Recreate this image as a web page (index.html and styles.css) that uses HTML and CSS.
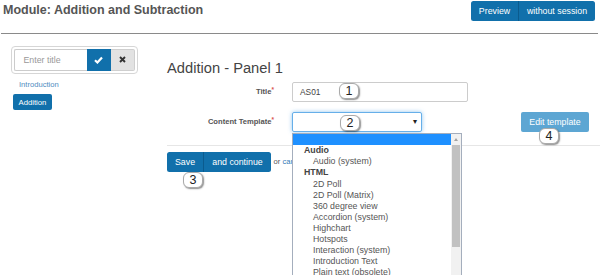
FILE: index.html
```html
<!DOCTYPE html>
<html>
<head>
<meta charset="utf-8">
<link rel="stylesheet" href="styles.css">
</head>
<body>
<div class="topbar">
  <h1 class="module-title">Module: Addition and Subtraction</h1>
  <div class="btn-group top-group"><span class="btn btn-primary">Preview</span><span class="btn btn-primary">without session</span></div>
</div>
<div class="main">
  <aside class="sidebar">
    <div class="title-box">
      <div class="title-input">Enter title</div>
      <span class="icon-btn ok"><svg width="9" height="8" viewBox="0 0 9 8"><path d="M1 4.3 L3.4 6.5 L8 1.5" fill="none" stroke="#fff" stroke-width="2.2"/></svg></span>
      <span class="icon-btn cancel"><svg width="7" height="7" viewBox="0 0 7 7"><path d="M1 1 L6 6 M6 1 L1 6" fill="none" stroke="#333" stroke-width="1.9"/></svg></span>
    </div>
    <a class="nav-link">Introduction</a>
    <span class="nav-active">Addition</span>
  </aside>
  <section class="content">
    <h2 class="panel-title">Addition - Panel 1</h2>
    <div class="form-row row-title">
      <label class="field-label">Title<span class="req">*</span></label>
      <div class="field text-field">AS01<span class="badge b1">1</span></div>
    </div>
    <div class="form-row row-template">
      <label class="field-label">Content Template<span class="req">*</span></label>
      <div class="field select-field">
        <span class="caret">&#9662;</span>
        <span class="badge b2">2</span>
        <div class="dropdown">
          <div class="dd-list">
            <div class="dd-item dd-selected"></div>
            <div class="dd-group">Audio</div>
            <div class="dd-item">Audio (system)</div>
            <div class="dd-group">HTML</div>
            <div class="dd-item">2D Poll</div>
            <div class="dd-item">2D Poll (Matrix)</div>
            <div class="dd-item">360 degree view</div>
            <div class="dd-item">Accordion (system)</div>
            <div class="dd-item">Highchart</div>
            <div class="dd-item">Hotspots</div>
            <div class="dd-item">Interaction (system)</div>
            <div class="dd-item">Introduction Text</div>
            <div class="dd-item">Plain text (obsolete)</div>
          </div>
          <div class="dd-scroll">
            <span class="dd-arrow"></span>
            <span class="dd-thumb"></span>
          </div>
        </div>
      </div>
      <span class="btn edit-btn">Edit template<span class="badge b4">4</span></span>
    </div>
    <hr class="divider">
    <div class="actions">
      <div class="btn-group save-group"><span class="btn btn-primary">Save</span><span class="btn btn-primary">and continue</span><span class="badge b3">3</span></div>
      <span class="or-text">or <a class="cancel-link">cancel</a></span>
    </div>
  </section>
</div>
</body>
</html>
```
FILE: styles.css
```css
html, body {
  margin: 0;
  padding: 0;
  height: 275px;
  overflow: hidden;
  background: #fff;
}
body {
  font-family: "Liberation Sans", Arial, sans-serif;
  color: #555;
  font-size: 8.8px;
}
.topbar {
  display: flex;
  justify-content: space-between;
  align-items: flex-start;
  height: 33px;
  margin: 0 2px 0 1px;
  padding: 0 3px 0 2px;
  border-bottom: 1px solid #8a8a8a;
}
.module-title {
  margin: 0;
  padding-top: 3.4px;
  font-size: 12.5px;
  line-height: 15px;
  font-weight: bold;
  color: #555;
}
.btn-group {
  display: flex;
  border-radius: 2.5px;
  overflow: hidden;
}
.top-group {
  margin-top: 1px;
  height: 20px;
}
.btn {
  display: flex;
  align-items: center;
  justify-content: center;
  font-size: 8.8px;
  color: #fff;
  white-space: nowrap;
}
.btn-primary {
  background: #1170ab;
}
.top-group .btn:first-child {
  width: 47px;
  border-right: 1px solid #0b5b8e;
}
.top-group .btn:last-child {
  width: 76px;
}
.main {
  display: flex;
}
.sidebar {
  width: 167px;
  flex: none;
  padding-top: 12px;
  display: flex;
  flex-direction: column;
  align-items: flex-start;
}
.title-box {
  margin-left: 11px;
  width: 121px;
  height: 21.5px;
  padding: 2px;
  border: 1px solid #d6d6d6;
  border-radius: 4px;
  display: flex;
}
.title-input {
  width: 63px;
  padding-left: 8.5px;
  border: 1px solid #ccc;
  border-right: none;
  border-radius: 2px 0 0 2px;
  color: #999;
  font-size: 8.8px;
  display: flex;
  align-items: center;
}
.icon-btn {
  width: 24px;
  display: flex;
  align-items: center;
  justify-content: center;
}
.icon-btn.ok {
  background: #1170ab;
}
.icon-btn.cancel {
  background: #e2e2e2;
  border: 1px solid #cfcfcf;
  border-left: none;
  border-radius: 0 2px 2px 0;
  box-sizing: border-box;
}
.nav-link {
  margin: 6.7px 0 0 19px;
  font-size: 7.6px;
  line-height: 10px;
  color: #4f8cc0;
}
.nav-active {
  margin: 4.3px 0 0 13px;
  height: 15.7px;
  padding: 0 5.6px;
  display: flex;
  align-items: center;
  background: #1170ab;
  color: #fff;
  font-size: 7.7px;
  border-radius: 2px;
}
.content {
  flex: 1;
  padding-top: 26px;
}
.panel-title {
  margin: 0;
  font-size: 14.7px;
  line-height: 17px;
  font-weight: normal;
  color: #444;
}
.form-row {
  display: grid;
  grid-template-columns: 107px auto 1fr;
  column-gap: 18px;
  align-items: center;
}
.row-title {
  margin-top: 4.7px;
}
.row-template {
  margin-top: 10.6px;
  padding-right: 11px;
}
.field-label {
  text-align: right;
  font-size: 7.6px;
  font-weight: bold;
  color: #555;
  margin-top: -2px;
}
.req {
  color: #d9534f;
  font-size: 6.5px;
  vertical-align: 2px;
}
.field {
  position: relative;
  height: 20px;
  box-sizing: border-box;
  background: #fff;
}
.text-field {
  width: 176px;
  border: 1px solid #ccc;
  border-radius: 2px;
  padding-left: 7px;
  font-size: 8.4px;
  color: #444;
  display: flex;
  align-items: center;
}
.select-field {
  width: 130px;
  border: 1px solid #66afe9;
  border-radius: 2px;
  box-shadow: 0 0 4px rgba(102, 175, 233, 0.7);
}
.caret {
  position: absolute;
  left: 120px;
  top: 4px;
  font-size: 8px;
  color: #222;
}
.badge {
  position: absolute;
  width: 20px;
  height: 16px;
  box-sizing: border-box;
  background: #fff;
  border: 1px solid #aaa;
  border-radius: 6px;
  box-shadow: 1px 1px 1.5px rgba(0, 0, 0, 0.45);
  color: #222;
  font-size: 12.5px;
  line-height: 14px;
  text-align: center;
  font-weight: normal;
}
.b1 { left: 46px; top: 0; }
.b2 { left: 47px; top: 2px; }
.b3 { left: 16px; top: 20px; }
.b4 { left: 18px; top: 16px; }
.edit-btn {
  position: relative;
  justify-self: end;
  width: 68px;
  height: 20px;
  background: #5da6d3;
  border-radius: 2px;
}
.dropdown {
  position: absolute;
  z-index: 5;
  left: -1px;
  top: 20px;
  width: 170px;
  height: 143px;
  box-sizing: border-box;
  border: 1px solid #a4aebd;
  border-bottom: none;
  background: #fff;
  display: flex;
  overflow: hidden;
}
.dd-list {
  flex: 1;
  font-size: 8.8px;
  color: #555;
}
.dd-item, .dd-group {
  height: 11.1px;
  line-height: 11.1px;
  white-space: nowrap;
}
.dd-item {
  padding-left: 20px;
}
.dd-group {
  padding-left: 11px;
  font-weight: bold;
  color: #444;
}
.dd-selected {
  height: 11px;
  background: #1e90ff;
}
.dd-scroll {
  width: 10px;
  flex: none;
  background: #f1f1f1;
  position: relative;
}
.dd-arrow {
  position: absolute;
  left: 3px;
  top: 4px;
  width: 0;
  height: 0;
  border-left: 2.5px solid transparent;
  border-right: 2.5px solid transparent;
  border-bottom: 3px solid #a3a3a3;
}
.dd-thumb {
  position: absolute;
  left: 1px;
  top: 11px;
  width: 8px;
  height: 102px;
  background: #c1c1c1;
}
.divider {
  margin: 12.7px 0 0 0;
  border: none;
  border-top: 1px solid #e6e6e6;
  height: 0;
}
.actions {
  margin-top: 5.7px;
  display: flex;
  align-items: center;
}
.save-group {
  position: relative;
  height: 20px;
  overflow: visible;
}
.save-group .btn:first-child {
  width: 36px;
  border-right: 1px solid #0b5b8e;
  border-radius: 2.5px 0 0 2.5px;
}
.save-group .btn:nth-child(2) {
  width: 67px;
  border-radius: 0 2.5px 2.5px 0;
}
.or-text {
  margin-left: 2.5px;
  font-size: 7.6px;
  color: #555;
}
.cancel-link {
  color: #337ab7;
}
```
